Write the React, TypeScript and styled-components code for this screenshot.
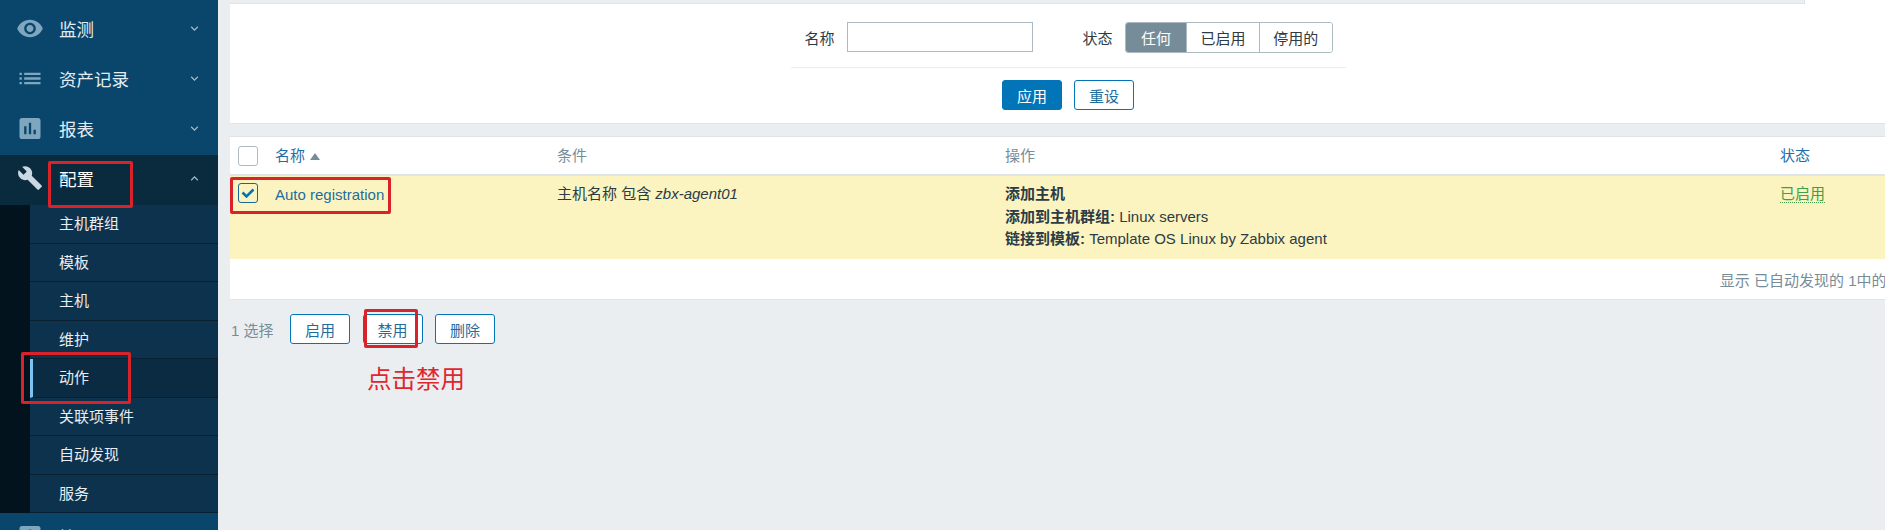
import React from 'react';
import styled, { createGlobalStyle } from 'styled-components';
import {
  MdRemoveRedEye,
  MdList,
  MdAssessment,
  MdBuild,
  MdAccountBox,
  MdKeyboardArrowDown,
  MdKeyboardArrowUp,
} from 'react-icons/md';

const GlobalStyle = createGlobalStyle`
  html, body {
    margin: 0;
    padding: 0;
    height: 530px;
    overflow: hidden;
    background: #ebeef0;
    font-family: "Liberation Sans", "Noto Sans CJK SC", sans-serif;
    font-size: 15px;
  }
  * { box-sizing: border-box; }
`;

const Page = styled.div`
  position: relative;
  display: flex;
  width: 1885px;
  height: 530px;
  overflow: hidden;
`;

const Sidebar = styled.nav`
  flex: 0 0 218px;
  padding-top: 5px;
  background: #0a466b;
  color: #e6edf2;
`;

const MenuItem = styled.div<{ $open?: boolean }>`
  display: flex;
  align-items: center;
  height: 50px;
  padding: 0 16px 4px 16px;
  background: ${({ $open }) => ($open ? '#0a2a3e' : 'transparent')};
  color: ${({ $open }) => ($open ? '#ffffff' : '#e3ecf2')};
`;

const MenuIcon = styled.span<{ $open?: boolean }>`
  display: flex;
  justify-content: center;
  width: 28px;
  margin-right: 15px;
  font-size: ${({ $open }) => ($open ? '26px' : '31px')};
  color: ${({ $open }) => ($open ? '#c9d8e2' : '#7fa6bf')};
`;

const MenuLabel = styled.span`
  flex: 1;
  font-size: 17.5px;
`;

const Chevron = styled.span`
  display: flex;
  font-size: 15px;
  color: #9fbbcd;
`;

const SubMenu = styled.div`
  padding-left: 30px;
  background: #03131e;
`;

const SubItem = styled.div<{ $active?: boolean }>`
  display: flex;
  align-items: center;
  height: 38.5px;
  padding-left: ${({ $active }) => ($active ? '26px' : '29px')};
  padding-bottom: 2px;
  border-bottom: 1px solid #08202f;
  border-left: ${({ $active }) => ($active ? '3px solid #7cc2f2' : '0')};
  background: ${({ $active }) => ($active ? '#0b2b43' : '#0d324d')};
  color: #e8eef3;
  font-size: 15px;
`;

const Main = styled.main`
  flex: 1;
  min-width: 0;
  overflow: hidden;
  padding-left: 12px;
`;

const Content = styled.div`
  width: 1676px;
`;

const FilterPanel = styled.section`
  background: #fff;
  border-bottom: 1px solid #dfe4e7;
  height: 124px;
`;

const TopStrip = styled.div`
  width: 1575px;
  height: 4px;
  background: #ebeef0;
  border-bottom: 1px solid #dfe4e7;
  border-right: 1px solid #dfe4e7;
`;

const FilterBody = styled.div`
  width: 555px;
  margin: 0 auto;
`;

const FilterRow = styled.div`
  display: flex;
  align-items: center;
  height: 64px;
  padding: 3px 13px 0 14px;
  border-bottom: 1px solid #ebeef0;
  color: #2d3b44;
`;

const FilterLabel = styled.label`
  width: 43px;
`;

const NameInput = styled.input`
  width: 187px;
  height: 30px;
  margin-right: 50px;
  border: 1px solid #acbbc2;
  background: #fff;
`;

const Segments = styled.div`
  display: flex;
  height: 31px;
  margin-top: 1px;
  border: 1px solid #acbbc2;
  border-radius: 3px;
  overflow: hidden;
`;

const Segment = styled.span<{ $active?: boolean; $w: number }>`
  display: flex;
  align-items: center;
  justify-content: center;
  width: ${({ $w }) => $w}px;
  background: ${({ $active }) => ($active ? '#768d99' : '#fff')};
  color: ${({ $active }) => ($active ? '#fff' : '#2d3b44')};
  & + & {
    border-left: 1px solid #acbbc2;
  }
`;

const FilterActions = styled.div`
  display: flex;
  justify-content: center;
  gap: 12px;
  padding-top: 12px;
`;

const Button = styled.button<{ $primary?: boolean }>`
  width: 60px;
  height: 30px;
  padding: 0;
  border: 1px solid #0275b8;
  border-radius: 3px;
  background: ${({ $primary }) => ($primary ? '#0275b8' : '#fff')};
  color: ${({ $primary }) => ($primary ? '#fff' : '#1f6d9c')};
  font: inherit;
`;

const TablePanel = styled.section`
  margin-top: 12px;
  background: #fff;
  border-top: 1px solid #dfe4e7;
  border-bottom: 1px solid #dfe4e7;
`;

const Row = styled.div<{ $head?: boolean }>`
  display: grid;
  grid-template-columns: 45px 282px 448px 775px 1fr;
  align-items: ${({ $head }) => ($head ? 'center' : 'start')};
  height: ${({ $head }) => ($head ? '39px' : '83px')};
  padding-top: ${({ $head }) => ($head ? '0' : '7px')};
  background: ${({ $head }) => ($head ? '#fff' : '#fbf4c1')};
  border-bottom: ${({ $head }) => ($head ? '2px solid #dfe4e7' : '0')};
  color: #2d3b44;
  line-height: 22.5px;
`;

const CheckCell = styled.div`
  padding-left: 8px;
  height: 20px;
`;

const CheckBox = styled.span<{ $checked?: boolean }>`
  display: flex;
  align-items: center;
  justify-content: center;
  width: 20px;
  height: 20px;
  border: 1px solid ${({ $checked }) => ($checked ? '#1b6599' : '#acbbc2')};
  border-radius: 3px;
`;

const HeadLink = styled.span`
  display: flex;
  align-items: center;
  gap: 5px;
  padding-top: 1px;
  color: #1f6ea8;
`;

const SortArrow = styled.i`
  width: 0;
  height: 0;
  border-left: 5px solid transparent;
  border-right: 5px solid transparent;
  border-bottom: 7px solid #768d99;
`;

const HeadText = styled.span`
  padding-top: 1px;
  color: #768d99;
`;

const NameLink = styled.a`
  padding-top: 1px;
  color: #1f6d9c;
`;

const ActionLine = styled.div``;

const Status = styled.span`
  color: #429e47;
  border-bottom: 1px dotted #429e47;
`;

const TableFooter = styled.div`
  display: flex;
  justify-content: flex-end;
  align-items: center;
  height: 40px;
  padding-right: 7px;
  color: #768d99;
`;

const BulkBar = styled.div`
  display: flex;
  align-items: center;
  margin-top: 14px;
  height: 30px;
  color: #768d99;
`;

const SelectedCount = styled.span`
  width: 60px;
  padding-left: 1px;
`;

const BulkButton = styled(Button)`
  margin-right: 12.5px;
`;

const Callout = styled.div<{ $x: number; $y: number; $w: number; $h: number }>`
  position: absolute;
  left: ${({ $x }) => $x}px;
  top: ${({ $y }) => $y}px;
  width: ${({ $w }) => $w}px;
  height: ${({ $h }) => $h}px;
  border: 3px solid #d9232b;
  border-radius: 2px;
  pointer-events: none;
`;

const Note = styled.div`
  position: absolute;
  left: 367px;
  top: 364px;
  color: #e0262e;
  font-size: 24.5px;
  line-height: 32px;
`;

const CheckMark = () => (
  <svg width="16" height="16" viewBox="0 0 16 16" fill="none">
    <path d="M2.5 7.5 L6.5 11.5 L13.5 4.5" stroke="#0275b8" strokeWidth="2.6" />
  </svg>
);

const menu = [
  { label: '监测', icon: <MdRemoveRedEye /> },
  { label: '资产记录', icon: <MdList /> },
  { label: '报表', icon: <MdAssessment /> },
];

const subItems = ['主机群组', '模板', '主机', '维护', '动作', '关联项事件', '自动发现', '服务'];

export default function App(): JSX.Element {
  return (
    <Page>
      <GlobalStyle />
      <Sidebar>
        {menu.map((m) => (
          <MenuItem key={m.label}>
            <MenuIcon>{m.icon}</MenuIcon>
            <MenuLabel>{m.label}</MenuLabel>
            <Chevron>
              <MdKeyboardArrowDown />
            </Chevron>
          </MenuItem>
        ))}
        <MenuItem $open>
          <MenuIcon $open>
            <MdBuild />
          </MenuIcon>
          <MenuLabel>配置</MenuLabel>
          <Chevron>
            <MdKeyboardArrowUp />
          </Chevron>
        </MenuItem>
        <SubMenu>
          {subItems.map((s) => (
            <SubItem key={s} $active={s === '动作'}>
              {s}
            </SubItem>
          ))}
        </SubMenu>
        <MenuItem>
          <MenuIcon>
            <MdAccountBox />
          </MenuIcon>
          <MenuLabel>管理</MenuLabel>
          <Chevron>
            <MdKeyboardArrowDown />
          </Chevron>
        </MenuItem>
      </Sidebar>
      <Main>
        <Content>
          <FilterPanel>
            <TopStrip />
            <FilterBody>
              <FilterRow>
                <FilterLabel>名称</FilterLabel>
                <NameInput />
                <FilterLabel>状态</FilterLabel>
                <Segments>
                  <Segment $active $w={60}>
                    任何
                  </Segment>
                  <Segment $w={74}>已启用</Segment>
                  <Segment $w={73}>停用的</Segment>
                </Segments>
              </FilterRow>
              <FilterActions>
                <Button $primary>应用</Button>
                <Button>重设</Button>
              </FilterActions>
            </FilterBody>
          </FilterPanel>
          <TablePanel>
            <Row $head>
              <CheckCell>
                <CheckBox />
              </CheckCell>
              <HeadLink>
                名称 <SortArrow />
              </HeadLink>
              <HeadText>条件</HeadText>
              <HeadText>操作</HeadText>
              <HeadLink>状态</HeadLink>
            </Row>
            <Row>
              <CheckCell>
                <CheckBox $checked>
                  <CheckMark />
                </CheckBox>
              </CheckCell>
              <NameLink>Auto registration</NameLink>
              <div>
                主机名称 包含 <em>zbx-agent01</em>
              </div>
              <div>
                <ActionLine>
                  <b>添加主机</b>
                </ActionLine>
                <ActionLine>
                  <b>添加到主机群组:</b> Linux servers
                </ActionLine>
                <ActionLine>
                  <b>链接到模板:</b> Template OS Linux by Zabbix agent
                </ActionLine>
              </div>
              <div>
                <Status>已启用</Status>
              </div>
            </Row>
            <TableFooter>显示 已自动发现的 1中的 1</TableFooter>
          </TablePanel>
          <BulkBar>
            <SelectedCount>1 选择</SelectedCount>
            <BulkButton>启用</BulkButton>
            <BulkButton>禁用</BulkButton>
            <BulkButton>删除</BulkButton>
          </BulkBar>
        </Content>
      </Main>
      <Callout $x={48} $y={161} $w={85} $h={47} />
      <Callout $x={21} $y={352} $w={110} $h={52} />
      <Callout $x={230} $y={177} $w={161} $h={37} />
      <Callout $x={364} $y={309} $w={54} $h={39} />
      <Note>点击禁用</Note>
    </Page>
  );
}
